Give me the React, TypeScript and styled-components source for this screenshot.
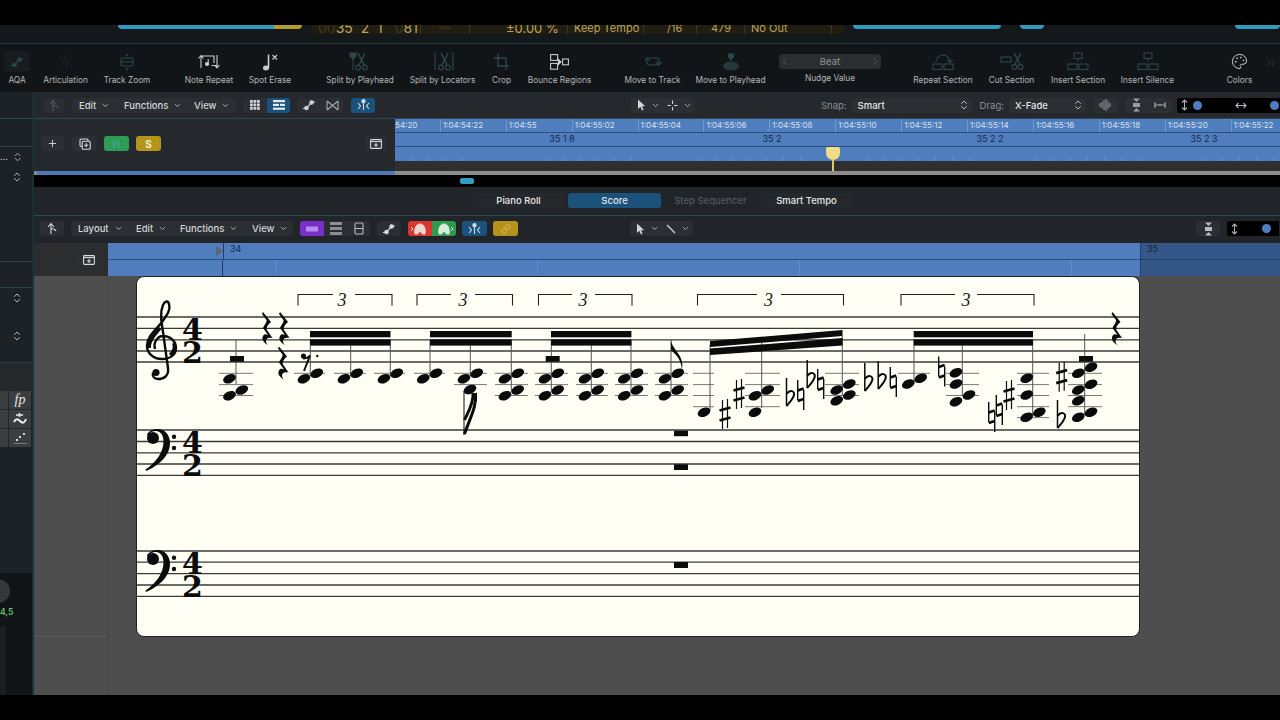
import React from "react";
import styled, { createGlobalStyle } from "styled-components";
import {
  ChevronDown,
  ChevronLeft,
  ChevronRight,
  ChevronsRight,
  ChevronsUpDown,
  Link,
  Palette,
  Plus,
} from "lucide-react";

const GlobalStyle = createGlobalStyle`
  html, body { margin: 0; padding: 0; background: #000; }
  * { box-sizing: border-box; }
  body { font-family: Inter, "Liberation Sans", sans-serif; }
`;

/* ---------- small drawn icons ---------- */

function Ico({ w = 20, h = 18, children }: { w?: number; h?: number; children: React.ReactNode }) {
  return (
    <svg width={w} height={h} viewBox={`0 0 ${w} ${h}`} fill="none" stroke="currentColor" strokeWidth={1.1}>
      {children}
    </svg>
  );
}

const UpArrow = () => (
  <Ico w={12} h={13}>
    <path d="M5 12 V2 M2 5 L5 1.5 L8 5 M5 6.5 C7 6.5 9 7 10 9" />
  </Ico>
);
const Pointer = () => (
  <svg width="9" height="12" viewBox="0 0 9 12">
    <path d="M1 0.5 L1 10 L3.4 7.8 L5 11.4 L6.6 10.7 L5 7.3 L8.2 7.2 Z" fill="currentColor" />
  </svg>
);
const Cross = () => (
  <Ico w={11} h={11}>
    <path d="M5.5 0.5 V4 M5.5 7 V10.5 M0.5 5.5 H4 M7 5.5 H10.5" />
  </Ico>
);
const GridIcon = () => (
  <svg width="10" height="10" viewBox="0 0 10 10" fill="currentColor">
    {[0, 3.5, 7].map((y) =>
      [0, 3.5, 7].map((x) => <rect key={`${x}-${y}`} x={x} y={y} width="2.8" height="2.8" />)
    )}
  </svg>
);
const ListIcon = () => (
  <svg width="12" height="10" viewBox="0 0 12 10" fill="currentColor">
    <rect x="0" y="0" width="12" height="2.2" />
    <rect x="0" y="3.8" width="6" height="2.2" />
    <rect x="7" y="3.8" width="5" height="2.2" />
    <rect x="0" y="7.6" width="12" height="2.2" />
  </svg>
);
const AutoIcon = () => (
  <Ico w={14} h={12}>
    <path d="M1 9.5 H4 L10 3 H13" strokeWidth={1.2} />
    <circle cx="4.5" cy="9" r="1.7" fill="currentColor" />
    <circle cx="9.5" cy="3.5" r="1.7" fill="currentColor" />
  </Ico>
);
const BowtieIcon = () => (
  <Ico w={13} h={11}>
    <path d="M1 1 L12 10 M1 10 L12 1 M1 1 V10 M12 1 V10" />
  </Ico>
);
const FlexIcon = () => (
  <Ico w={13} h={12}>
    <circle cx="6.5" cy="2.2" r="1.6" fill="currentColor" />
    <path d="M6.5 3 V11 M1 4 L3.5 7 L1 10 M12 4 L9.5 7 L12 10" />
  </Ico>
);
const StackIcon = () => (
  <Ico w={12} h={12}>
    <rect x="1" y="1" width="8" height="7.5" rx="1" />
    <rect x="3.2" y="3.2" width="8" height="8" rx="1" fill="#2a2d31" />
    <path d="M7.2 5.2 V9.2 M5.2 7.2 H9.2" />
  </Ico>
);
const TrayIcon = () => (
  <Ico w={12} h={10}>
    <rect x="0.6" y="0.6" width="10.8" height="8.8" rx="0.8" />
    <path d="M0.6 2.6 H11.4" />
    <path d="M6 4 V8 M4 6 H8" />
  </Ico>
);
const TrackZoomIcon = () => (
  <Ico w={14} h={18}>
    <path d="M7 0.5 L5.2 2.8 H8.8 Z M7 17.5 L5.2 15.2 H8.8 Z" fill="currentColor" stroke="none" />
    <rect x="1" y="5" width="12" height="8" rx="1" />
    <path d="M1 9 H13" />
  </Ico>
);
const NoteRepeatIcon = () => (
  <Ico w={22} h={16}>
    <path d="M3 14 V2 M0.5 4.5 L3 1.5 L5.5 4.5 M3 2 H16 V9 M13.5 11.5 L19 11.5 M19 1 V13 M16.5 11 L19 14 L21.5 11" />
    <circle cx="9" cy="10" r="1.5" fill="currentColor" />
    <path d="M10.2 10 V5" />
  </Ico>
);
const SpotEraseIcon = () => (
  <Ico w={16} h={18}>
    <ellipse cx="4" cy="15" rx="3" ry="2.4" fill="currentColor" stroke="none" />
    <path d="M6.5 15 V1.5" strokeWidth={1.6} />
    <path d="M10.5 2 L15 6.5 M15 2 L10.5 6.5" />
  </Ico>
);
const ScissorIcon = ({ head }: { head: "play" | "loc" }) => (
  <Ico w={22} h={19}>
    {head === "play" ? (
      <>
        <path d="M1 1 H7 V4 L4 7 L1 4 Z" fill="currentColor" />
        <path d="M4 6 V18" />
      </>
    ) : (
      <path d="M3 1 V18 M21 1 V18" />
    )}
    <path d="M9 1 L15 13 M16 1 L10 13" strokeWidth={1.5} />
    <circle cx="9" cy="15.5" r="2.4" />
    <circle cx="16" cy="15.5" r="2.4" />
  </Ico>
);
const CropIcon = () => (
  <Ico w={17} h={18}>
    <path d="M5 1 V13 H16 M1 5 H13 V17" strokeWidth={1.4} />
  </Ico>
);
const BounceIcon = () => (
  <Ico w={19} h={16}>
    <rect x="0.6" y="0.6" width="7" height="5.8" />
    <rect x="0.6" y="9.4" width="7" height="5.8" />
    <rect x="12.6" y="5" width="5.8" height="5.8" />
    <path d="M8.5 5.5 L11 8 L8.5 10.5 Z" fill="currentColor" />
  </Ico>
);
const MoveTrackIcon = () => (
  <Ico w={18} h={17}>
    <path d="M2 5 H12 A3 3 0 0 1 15 8 V11 M12 9 L15 12 L18 9 M16 12 H6 A3 3 0 0 1 3 9 V7 M0.5 8 L3 5 L5.5 8" />
  </Ico>
);
const MovePlayIcon = () => (
  <Ico w={18} h={19}>
    <path d="M9 1 V9 M6.5 2 H11.5 V5 L9 7.5 L6.5 5 Z" fill="currentColor" />
    <ellipse cx="9" cy="14" rx="7.5" ry="4" fill="currentColor" opacity="0.7" />
  </Ico>
);
const SectionIcon = ({ kind }: { kind: "repeat" | "insert" | "silence" }) => (
  <Ico w={22} h={19}>
    {kind === "repeat" ? (
      <path d="M4 10 A7 7 0 0 1 18 10 M15.5 8 L18 10.5 L20.5 8" />
    ) : (
      <>
        <rect x="7" y="1" width="8" height="5.5" />
        <path d="M11 6.5 V10" />
      </>
    )}
    <rect x="1" y="12" width="9" height="5.5" />
    <rect x="12" y="12" width="9" height="5.5" />
  </Ico>
);
const CutSectionIcon = () => (
  <Ico w={24} h={19}>
    <rect x="1" y="5" width="10" height="5" />
    <path d="M14 1 L20 12 M21 1 L15 12" strokeWidth={1.4} />
    <circle cx="14.5" cy="15" r="2.4" />
    <circle cx="20.5" cy="15" r="2.4" />
  </Ico>
);
const WaveIcon = () => (
  <svg width="13" height="12" viewBox="0 0 13 12" stroke="currentColor" strokeWidth="1">
    {[[1, 4, 8], [3, 3, 9], [5, 1, 11], [7, 0, 12], [9, 2, 10], [11, 4, 8]].map(([x, a, b]) => (
      <line key={x} x1={x} x2={x} y1={a} y2={b} />
    ))}
  </svg>
);
const HeightIcon = () => (
  <svg width="9" height="14" viewBox="0 0 9 14" fill="currentColor">
    <path d="M1 0.5 H8 L4.5 4 Z M1 13.5 H8 L4.5 10 Z" />
    <rect x="1" y="5" width="7" height="4" />
  </svg>
);
const WidthIcon = () => (
  <svg width="12" height="8" viewBox="0 0 12 8" fill="currentColor">
    <path d="M0 0.5 V7.5 L4 4 Z M12 0.5 V7.5 L8 4 Z" />
    <rect x="4" y="3" width="4" height="2" />
  </svg>
);
const VArrows = () => (
  <Ico w={7} h={12}>
    <path d="M3.5 1 V11 M1 3.5 L3.5 1 L6 3.5 M1 8.5 L3.5 11 L6 8.5" />
  </Ico>
);
const HArrows = () => (
  <Ico w={12} h={7}>
    <path d="M1 3.5 H11 M3.5 1 L1 3.5 L3.5 6 M8.5 1 L11 3.5 L8.5 6" />
  </Ico>
);
const SingleLaneIcon = () => (
  <svg width="12" height="6" viewBox="0 0 12 6" fill="currentColor">
    <rect x="0" y="0.5" width="12" height="5" rx="0.8" />
  </svg>
);
const LanesIcon = () => (
  <svg width="12" height="13" viewBox="0 0 12 13" fill="currentColor">
    <rect x="0" y="0" width="12" height="3" />
    <rect x="0" y="5" width="12" height="3" />
    <rect x="0" y="10" width="12" height="3" />
  </svg>
);
const TwoLanesIcon = () => (
  <Ico w={10} h={13}>
    <rect x="1" y="1" width="8" height="11" rx="1" />
    <path d="M1 6.5 H9" />
  </Ico>
);
const BrainIcon = ({ side }: { side: "l" | "r" }) => (
  <svg width="20" height="12" viewBox="0 0 20 12" fill="none" stroke="currentColor" strokeWidth="1">
    {side === "l" ? <path d="M1 4 L3 6 L1 8" /> : <path d="M17 4 L19 6 L17 8" />}
    <path d="M5 11 C4 6 6 1 10 1 C14 1 16 6 15 11 H12.5 L10 8 L7.5 11 Z" fill="currentColor" />
  </svg>
);

/* ---------- chrome ---------- */

const Page = styled.div`
  width: 1280px;
  height: 720px;
  display: flex;
  flex-direction: column;
  overflow: hidden;
  background: #000;
  color: #d5d7d9;
`;

const BlackBand = styled.div`
  flex: 0 0 25px;
  background: #000;
`;

const Transport = styled.div`
  flex: 0 0 19px;
  display: flex;
  align-items: flex-start;
  background: #14181b;
  border-bottom: 1px solid #1f3a3c;
  overflow: hidden;
`;

const KeyBar = styled.div<{ $left: number; $w: number; $split?: number }>`
  flex: 0 0 ${(p) => p.$w}px;
  margin-left: ${(p) => p.$left}px;
  height: 4px;
  border-radius: 0 0 4px 4px;
  background: ${(p) =>
    p.$split
      ? `linear-gradient(90deg, #2f9dbf ${p.$split}%, #b79a2b ${p.$split}%)`
      : "#2f9dbf"};
`;

const Lcd = styled.div`
  flex: 0 0 532px;
  margin-left: 10px;
  height: 9px;
  display: flex;
  background: #211d10;
  border-radius: 0 0 5px 5px;
  color: #bca35c;
`;

const LcdCell = styled.div<{ $w: number; $size?: number; $pad?: number }>`
  flex: 0 0 ${(p) => p.$w}px;
  height: 9px;
  padding-left: ${(p) => p.$pad ?? 6}px;
  border-right: 1px solid #3d3518;
  display: flex;
  font-size: ${(p) => p.$size ?? 11}px;
  line-height: 6px;
  white-space: pre;
  overflow: hidden;
  &:last-child { border-right: 0; }
`;

const DimDigit = styled.span`
  color: #3f381d;
`;

const MainToolbar = styled.div`
  flex: 0 0 48px;
  display: flex;
  align-items: stretch;
  padding-left: 5px;
  position: relative;
  background: #121518;
`;

const ToolItem = styled.div<{ $w: number; $gap: number; $dim?: boolean }>`
  flex: 0 0 ${(p) => p.$w}px;
  min-width: 0;
  margin-left: ${(p) => p.$gap}px;
  display: flex;
  flex-direction: column;
  align-items: center;
  color: ${(p) => (p.$dim ? "#2c484a" : "#c8cacc")};
`;

const ToolIcon = styled.div<{ $bg?: boolean }>`
  margin-top: 7px;
  width: ${(p) => (p.$bg ? "26px" : "auto")};
  height: 21px;
  border-radius: 3px;
  background: ${(p) => (p.$bg ? "#181c1f" : "transparent")};
  display: flex;
  align-items: center;
  justify-content: center;
`;

const ToolLabel = styled.div`
  margin-top: 2px;
  font-size: 8.3px;
  line-height: 12px;
  color: #b4b7b9;
  white-space: nowrap;
`;

const Nudge = styled.div`
  width: 102px;
  height: 15px;
  margin-top: 10px;
  margin-bottom: 1px;
  border-radius: 4px;
  background: #2b2e30;
  display: flex;
  align-items: center;
  justify-content: space-between;
  color: #50565a;
`;

const NudgeText = styled.span`
  font-size: 9.5px;
  color: #8d9193;
`;

const MoreTools = styled.div`
  position: absolute;
  right: 2px;
  top: 10px;
  color: #262b2e;
`;

const Body = styled.div`
  flex: 0 0 603px;
  display: flex;
  min-height: 0;
`;

const Bottom = styled.div`
  flex: 0 0 25px;
  background: #000;
`;

/* ---------- left inspector ---------- */

const Sidebar = styled.div`
  flex: 0 0 34px;
  display: flex;
  flex-direction: column;
  background: #1d2226;
  border-right: 2px solid #17303a;
  overflow: hidden;
`;

const SideBlock = styled.div<{ $h: number; $line?: boolean; $bg?: string }>`
  flex: 0 0 ${(p) => p.$h}px;
  display: flex;
  align-items: center;
  justify-content: flex-end;
  padding-right: 9px;
  font-size: 9px;
  color: #c5c7c9;
  background: ${(p) => p.$bg ?? "transparent"};
  border-bottom: ${(p) => (p.$line ? "1px solid #2b4347" : "0")};
`;

const Ellipsis = styled.span`
  margin-right: 4px;
  line-height: 8px;
`;

const GlyphGrid = styled.div`
  flex: 0 0 56px;
  display: grid;
  grid-template-columns: 8px 22px;
  grid-template-rows: repeat(3, 1fr);
  gap: 1px;
  width: 31px;
  background: #232629;
`;

const GlyphCell = styled.div<{ $serif?: boolean }>`
  display: flex;
  align-items: center;
  justify-content: center;
  background: #3b3e41;
  color: #e2e2e2;
  font-family: ${(p) => (p.$serif ? '"Liberation Serif", serif' : "inherit")};
  font-style: ${(p) => (p.$serif ? "italic" : "normal")};
  font-size: 14px;
  line-height: 14px;
`;

const SideFill = styled.div`
  flex: 0 0 126px;
`;

const SideFoot = styled.div`
  flex: 1;
  display: flex;
  flex-direction: column;
  background: #101417;
  overflow: hidden;
`;

const Knob = styled.div`
  width: 24px;
  height: 24px;
  margin: 6px 0 0 -14px;
  border-radius: 50%;
  background: #34383b;
`;

const LevelText = styled.div`
  margin-top: 4px;
  font-size: 8.5px;
  font-weight: 600;
  color: #5fc76a;
  white-space: nowrap;
`;

const SideSlot = styled.div`
  flex: 1;
  margin-top: 9px;
  width: 6px;
  background: #1b1f22;
`;

/* ---------- main column ---------- */

const Main = styled.div`
  flex: 1;
  min-width: 0;
  display: flex;
  flex-direction: column;
`;

const LocalBar = styled.div<{ $h: number }>`
  flex: 0 0 ${(p) => p.$h}px;
  display: flex;
  align-items: center;
  background: #25282c;
  border-bottom: 1px solid #2d4a50;
`;

const Btn = styled.div<{ $w: number; $gap: number; $bg?: string; $fg?: string }>`
  flex: 0 0 ${(p) => p.$w}px;
  margin-left: ${(p) => p.$gap}px;
  height: 15px;
  border-radius: 3px;
  background: ${(p) => p.$bg ?? "#2b2e32"};
  color: ${(p) => p.$fg ?? "#d8dadc"};
  display: flex;
  align-items: center;
  justify-content: center;
  font-size: 9.5px;
  font-weight: 600;
`;

const BtnGroup = styled.div<{ $w: number; $gap: number }>`
  flex: 0 0 ${(p) => p.$w}px;
  margin-left: ${(p) => p.$gap}px;
  height: 15px;
  border-radius: 3px;
  background: #2b2e32;
  display: flex;
  align-items: center;
  overflow: hidden;
`;

const Seg = styled.div<{ $w: number; $bg?: string; $fg?: string }>`
  flex: 0 0 ${(p) => p.$w}px;
  height: 100%;
  background: ${(p) => p.$bg ?? "transparent"};
  color: ${(p) => p.$fg ?? "#d0d2d4"};
  display: flex;
  align-items: center;
  justify-content: center;
`;

const MenuItem = styled.div<{ $w: number; $pad: number }>`
  flex: 0 0 ${(p) => p.$w}px;
  padding-left: ${(p) => p.$pad}px;
  display: flex;
  align-items: center;
  gap: 5px;
  font-size: 9.5px;
  font-weight: 500;
  color: #d3d5d7;
  white-space: nowrap;
`;

const SmallLabel = styled.div<{ $gap: number; $w: number }>`
  flex: 0 0 ${(p) => p.$w}px;
  margin-left: ${(p) => p.$gap}px;
  font-size: 9.5px;
  color: #8c8f92;
`;

const Select = styled.div<{ $w: number; $gap: number }>`
  flex: 0 0 ${(p) => p.$w}px;
  margin-left: ${(p) => p.$gap}px;
  height: 15px;
  padding: 0 2px 0 6px;
  border-radius: 3px;
  background: #2b2e32;
  display: flex;
  align-items: center;
  justify-content: space-between;
  font-size: 9.5px;
  font-weight: 500;
  color: #e4e5e6;
`;

const SliderBox = styled.div<{ $w: number; $gap: number }>`
  flex: 0 0 ${(p) => p.$w}px;
  margin-left: ${(p) => p.$gap}px;
  height: 15px;
  border-radius: 3px 0 0 3px;
  background: #000;
  display: flex;
  align-items: center;
  padding-left: 4px;
  color: #b0b3b6;
`;

const Dot = styled.span<{ $gap: number }>`
  flex: 0 0 9px;
  height: 9px;
  margin-left: ${(p) => p.$gap}px;
  border-radius: 50%;
  background: #4f7dbd;
`;

const SliderGlyph = styled.span<{ $gap: number }>`
  display: flex;
  margin-left: ${(p) => p.$gap}px;
`;

const TrackRow = styled.div`
  flex: 0 0 52px;
  display: flex;
  background: #25282c;
`;

const TrackHead = styled.div`
  flex: 0 0 361px;
  height: 50px;
  padding-bottom: 1px;
  display: flex;
  align-items: center;
`;

const TrackBtn = styled.div<{ $w: number; $gap: number; $bg?: string; $fg?: string }>`
  flex: 0 0 ${(p) => p.$w}px;
  margin-left: ${(p) => p.$gap}px;
  height: 15px;
  border-radius: 3px;
  background: ${(p) => p.$bg ?? "#2b2e32"};
  color: ${(p) => p.$fg ?? "#d8dadc"};
  display: flex;
  align-items: center;
  justify-content: center;
  font-size: 10px;
  font-weight: 700;
`;

const TrackRuler = styled.div`
  flex: 1;
  min-width: 0;
  display: flex;
  flex-direction: column;
  position: relative;
  overflow: hidden;
  background: #2f2f2f;
`;

const TimeRow = styled.div`
  flex: 0 0 14px;
  display: flex;
  margin-left: -21px;
  background: #4f7dbd;
  border-bottom: 1px solid #2b4f85;
`;

const TimeTick = styled.div`
  flex: 0 0 65.9px;
  padding-left: 2px;
  font-size: 8px;
  line-height: 13px;
  color: #d5e1f2;
  white-space: nowrap;
  border-left: 1px solid #7397cb;
`;

const BarRow = styled.div`
  flex: 0 0 14px;
  display: flex;
  background: #4f7dbd;
  border-bottom: 1px solid #2b4f85;
`;

const BarLabel = styled.div<{ $w: number }>`
  flex: 0 0 ${(p) => p.$w}px;
  text-align: center;
  font-size: 9px;
  line-height: 12px;
  color: #16294a;
  white-space: nowrap;
`;

const SubRow = styled.div`
  flex: 0 0 14px;
  background-color: #4f7dbd;
  background-image: repeating-linear-gradient(
    90deg,
    transparent 0,
    transparent 16.2px,
    #6b93cb 16.2px,
    #6b93cb 16.9px
  );
  background-size: 100% 3px;
  background-repeat: no-repeat;
  background-position: 0 bottom;
`;

const PlayheadFlag = styled.div`
  position: absolute;
  left: 431px;
  top: 28px;
  width: 14px;
  height: 13px;
  background: #f3dc86;
  border-radius: 2px 2px 7px 7px;
`;

const PlayheadLine = styled.div`
  position: absolute;
  left: 437px;
  top: 40px;
  width: 2px;
  height: 16px;
  background: #e6c95f;
`;

const OverviewLine = styled.div`
  flex: 0 0 4px;
  display: flex;
  background: #000;
`;

const OverviewPart = styled.div<{ $w?: number; $bg: string }>`
  flex: ${(p) => (p.$w ? `0 0 ${p.$w}px` : "1")};
  background: ${(p) => p.$bg};
`;

const Strip = styled.div`
  flex: 0 0 12px;
  background: #000;
  padding: 3px 0 0 426px;
`;

const ScrollPill = styled.div`
  width: 14px;
  height: 6px;
  border-radius: 2px;
  background: #2f9dbf;
`;

const TabBar = styled.div`
  flex: 0 0 29px;
  display: flex;
  align-items: center;
  padding: 0 0 2px 438px;
  background: #212428;
  border-bottom: 1px solid #2d4a50;
`;

const Tab = styled.div<{ $active?: boolean; $off?: boolean }>`
  flex: 0 0 93px;
  margin-right: 3px;
  height: 15px;
  border-radius: 3px;
  background: ${(p) => (p.$active ? "#1a527c" : p.$off ? "transparent" : "#24272b")};
  color: ${(p) => (p.$off ? "#55585b" : "#e4e6e8")};
  display: flex;
  align-items: center;
  justify-content: center;
  font-size: 9.5px;
  font-weight: 500;
`;

const ScoreBar = styled(LocalBar)`
  background: #212428;
  border-bottom: 0;
  padding-bottom: 2px;
`;

const ScoreRuler = styled.div`
  flex: 0 0 33px;
  display: flex;
`;

const RulerHead = styled.div`
  flex: 0 0 74px;
  display: flex;
  align-items: center;
  background: #2c2d2f;
`;

const RulerBlue = styled.div<{ $dim?: boolean }>`
  flex: ${(p) => (p.$dim ? "1" : "0 0 1032px")};
  display: flex;
  flex-direction: column;
  background: ${(p) => (p.$dim ? "#355788" : "#4f7dbd")};
  border-left: ${(p) => (p.$dim ? "1px solid #243f68" : "0")};
`;

const RulerTop = styled.div<{ $dim?: boolean; $pad: number }>`
  flex: 0 0 16px;
  display: flex;
  align-items: center;
  padding-left: ${(p) => p.$pad}px;
  border-bottom: 1px solid ${(p) => (p.$dim ? "#243f68" : "#2b4f85")};
`;

const RulerMark = styled.div`
  width: 0;
  height: 0;
  border-left: 7px solid #5d6670;
  border-top: 5px solid transparent;
  border-bottom: 5px solid transparent;
`;

const RulerNum = styled.div<{ $dim?: boolean }>`
  padding-left: 6px;
  height: 16px;
  line-height: 12px;
  font-size: 9px;
  color: ${(p) => (p.$dim ? "#15233a" : "#162c55")};
  border-left: ${(p) => (p.$dim ? "0" : "1px solid #213d6c")};
`;

const RulerLower = styled.div`
  flex: 1;
  display: flex;
`;

const RulerSeg = styled.div<{ $w: number; $strong?: boolean }>`
  flex: 0 0 ${(p) => p.$w}px;
  border-right: 1px solid ${(p) => (p.$strong ? "#213d6c" : "#5f8ac6")};
`;

const Canvas = styled.div`
  flex: 1;
  min-height: 0;
  display: flex;
  background: #4e4e4e;
`;

const Gutter = styled.div`
  flex: 0 0 74px;
  border-right: 1px solid #454545;
`;

const GutterTop = styled.div`
  height: 361px;
  border-bottom: 1px solid #5c5c5c;
`;

const Sheet = styled.div`
  flex: 0 0 1004px;
  height: 361px;
  margin: 0 0 0 28px;
  background: #fffff6;
  border-radius: 8px;
  border: 1px solid #222;
  overflow: hidden;
`;

const ScoreSvg = styled.svg`
  display: block;
  width: 1002px;
  height: 359px;
`;

/* ---------- score drawing, in page coordinates ---------- */

const INK = "#0b0b0b";
const TOP = [317, 328.4, 339.8, 351, 362];
const BASS = [430, 441.5, 452.8, 464, 475.3];
const THIRD = [551, 562.2, 573.6, 585, 596.3];

const Head = ({ x, y }: { x: number; y: number }) => (
  <ellipse cx={x} cy={y} rx={6.7} ry={4.3} transform={`rotate(-24 ${x} ${y})`} fill={INK} />
);

const Rest = ({ x, y }: { x: number; y: number }) => (
  <path
    transform={`translate(${x} ${y})`}
    fill={INK}
    d="M-4,0 L4,10 C1,13 -1,15 0,18 L5.5,26 C2,25 -1,26 -1,29 C-1,31 0,32 1,33 C-3,31 -6,27 -4,24 C-3,22 -1,22 1,23 L-4,16 C-2,12 0,10 -0.5,8 L-5,2 Z"
  />
);

const Sharp = ({ x, y }: { x: number; y: number }) => (
  <g stroke={INK}>
    <path d={`M${x - 2.5} ${y - 14} V${y + 15} M${x + 2.5} ${y - 15} V${y + 14}`} strokeWidth={1.2} />
    <path d={`M${x - 5.5} ${y - 3.5} L${x + 5.5} ${y - 6.5} M${x - 5.5} ${y + 6.5} L${x + 5.5} ${y + 3.5}`} strokeWidth={2.8} />
  </g>
);

const Flat = ({ x, y }: { x: number; y: number }) => (
  <g stroke={INK} fill="none">
    <path d={`M${x - 3.5} ${y - 18} V${y + 10}`} strokeWidth={1.5} />
    <path d={`M${x - 3.5} ${y - 2} C${x} ${y - 7} ${x + 5} ${y - 5} ${x + 4} ${y - 1} C${x + 3} ${y + 3} ${x} ${y + 6} ${x - 3.5} ${y + 10}`} strokeWidth={2} />
  </g>
);

const Natural = ({ x, y }: { x: number; y: number }) => (
  <g stroke={INK}>
    <path d={`M${x - 3} ${y - 15} V${y + 5} M${x + 3} ${y - 5} V${y + 15}`} strokeWidth={1.4} />
    <path d={`M${x - 3} ${y - 4.5} L${x + 3} ${y - 6.5} M${x - 3} ${y + 6} L${x + 3} ${y + 4}`} strokeWidth={2.8} />
  </g>
);

const TrebleClef = () => (
  <g fill="none" stroke={INK}>
    <path
      strokeWidth={2.4}
      d="M155,349 C153,342 158,336 163,336 C170,336 176,341 176,348 C176,355 170,359 162,359 C153,359 147,353 147,346 C147,336 156,330 162,322 C167,315 171,310 169,304 C168,300 165,301 163,305 C160,312 161,320 163,332 L168,368 C169,376 164,379 158,379 C154,379 152,376 153,373"
    />
    <path strokeWidth={3.6} d="M149,348 C149,340 155,334 160,328" />
    <path strokeWidth={3.6} d="M170,355 C174,352 175,347 174,343" />
    <circle cx={156} cy={372.5} r={3.6} fill={INK} stroke="none" />
  </g>
);

const BassClef = ({ y }: { y: number }) => (
  <g transform={`translate(0 ${y - 430})`} fill={INK}>
    <path d="M147,434 C149,431 153,429 157,429 C165,429 170,435 170,443 C170,456 158,466 146,471 L145.5,469.5 C155,463 163.5,453 163.5,441.5 C163.5,434.5 160,431 156,431 C152,431 149,433 148,437 Z" />
    <circle cx={153} cy={438} r={6} />
    <circle cx={174} cy={436.7} r={2.2} />
    <circle cx={174} cy={448} r={2.2} />
  </g>
);

const TimeSig = ({ a, b }: { a: number; b: number }) => (
  <g fontFamily='"DejaVu Serif", serif' fontWeight={700} fontSize={30} textAnchor="middle" fill={INK}>
    <text x={192.5} y={a}>4</text>
    <text x={192.5} y={b}>2</text>
  </g>
);

const Staff = ({ lines }: { lines: number[] }) => (
  <g stroke="#3a3a3a" strokeWidth={1.3}>
    {lines.map((y) => (
      <line key={y} x1={137} x2={1140} y1={y} y2={y} />
    ))}
  </g>
);

const brackets = [
  { a: 298, b: 392, l: 333, r: 355, t: 342 },
  { a: 417, b: 512.5, l: 451, r: 475, t: 463 },
  { a: 538.5, b: 632, l: 572, r: 595, t: 583 },
  { a: 697.5, b: 843.5, l: 757, r: 781, t: 768.5 },
  { a: 901, b: 1034, l: 955, r: 977, t: 966 },
];

const Bracket = ({ a, b, l, r, t }: { a: number; b: number; l: number; r: number; t: number }) => (
  <g>
    <path d={`M${a} 305.5 V294.5 H${l} M${r} 294.5 H${b} V305.5`} fill="none" stroke="#222" strokeWidth={1.1} />
    <text x={t} y={306} textAnchor="middle" fontFamily='"Liberation Serif", serif' fontStyle="italic" fontSize={18} fill="#1a1a1a">
      3
    </text>
  </g>
);

type Chord = { stem: [number, number, number]; heads: [number, number][] };

// left/right heads of the "second" clusters
const pair = (x: number, y1 = 378.7, y2 = 373.3): [number, number][] => [
  [x, y1],
  [x + 12.7, y2],
];
const quad = (x: number): [number, number][] => [...pair(x), ...pair(x, 395.7, 390)];

const chords: Chord[] = [
  { stem: [236, 340, 384], heads: [[229.5, 378.7], [229.5, 395.7], [241.8, 390]] },
  { stem: [310.3, 340, 376], heads: pair(304) },
  { stem: [350.7, 340, 376], heads: pair(344) },
  { stem: [390.3, 340, 376], heads: pair(384) },
  { stem: [430, 340, 376], heads: pair(423.3) },
  { stem: [470.3, 340, 376], heads: [...pair(464), [470, 389.5]] },
  { stem: [511.3, 340, 392], heads: quad(505) },
  { stem: [551.3, 340, 392], heads: quad(545) },
  { stem: [591.3, 340, 392], heads: quad(585) },
  { stem: [631, 340, 392], heads: quad(624.3) },
  { stem: [671, 340, 392], heads: quad(665) },
  { stem: [710, 345, 410], heads: [[704, 412.3]] },
  { stem: [761.7, 340, 408], heads: [[755, 412.3], [755, 395.7], [767.7, 390]] },
  { stem: [842.3, 336, 396], heads: [[836.7, 390], [849.3, 384], [836.7, 400.7], [849.3, 395]] },
  { stem: [914, 340, 382], heads: [[908.3, 384], [920.7, 378.3]] },
  { stem: [962.3, 340, 396], heads: [[956, 372.7], [956, 384], [956, 401.7], [969, 395]] },
  { stem: [1032.7, 340, 415], heads: [[1026.7, 378.3], [1026.7, 395], [1026.7, 417.3], [1039.3, 412.3]] },
  {
    stem: [1084.7, 334, 415],
    heads: [[1078.3, 373.3], [1091, 367.3], [1078.3, 390], [1091, 384.3], [1078.3, 400.7], [1078.3, 417.3], [1091, 412.3]],
  },
];

const ledgerSets: [number, number, number[]][] = [
  [219, 253, [373.3, 384.6, 395.5]],
  [294, 325, [373.3]],
  [334, 366, [373.3]],
  [374, 405, [373.3]],
  [414, 445, [373.3]],
  [454, 487, [373.3, 384.6]],
  [495, 528, [373.3, 384.6, 395.5]],
  [535, 568, [373.3, 384.6, 395.5]],
  [576, 608, [373.3, 384.6, 395.5]],
  [615, 648, [373.3, 384.6, 395.5]],
  [655, 688, [373.3, 384.6, 395.5]],
  [693, 714, [373.3, 384.6, 395.5, 406.7]],
  [745, 780, [373.3, 384.6, 395.5, 406.7]],
  [825, 859, [373.3, 384.6, 395.5]],
  [898, 930, [373.3]],
  [946, 979, [373.3, 384.6, 395.5]],
  [1017, 1049, [373.3, 384.6, 395.5, 406.7, 417.6]],
  [1068, 1102, [373.3, 384.6, 395.5, 406.7]],
];

const restBlocks: [number, number, number][] = [
  [230, 356, 5.7],
  [545.7, 356, 5.7],
  [1079, 356, 5.7],
  [674, 430.7, 5.5],
  [674, 464.3, 5.7],
  [674, 562, 6],
];

const flatBeams: [number, number][] = [
  [310, 390.5],
  [430, 511.7],
  [551, 631.4],
  [913.7, 1033],
];

function Score() {
  return (
    <ScoreSvg viewBox="137 277 1002 359">
      <Staff lines={TOP} />
      <Staff lines={BASS} />
      <Staff lines={THIRD} />
      <TrebleClef />
      <BassClef y={430} />
      <BassClef y={551} />
      <TimeSig a={340} b={363} />
      <TimeSig a={453} b={476} />
      <TimeSig a={574} b={597} />
      {brackets.map((b) => (
        <Bracket key={b.a} {...b} />
      ))}
      {ledgerSets.map(([a, b, ys]) =>
        ys.map((y) => <line key={`${a}-${y}`} x1={a} x2={b} y1={y} y2={y} stroke="#555" strokeWidth={0.8} />)
      )}
      {chords.map((c, i) => (
        <g key={i}>
          <line x1={c.stem[0]} x2={c.stem[0]} y1={c.stem[1]} y2={c.stem[2]} stroke="#555" strokeWidth={1} />
          {c.heads.map(([x, y]) => (
            <Head key={`${x}-${y}`} x={x} y={y} />
          ))}
        </g>
      ))}
      {flatBeams.map(([a, b]) => (
        <g key={a} fill={INK}>
          <rect x={a} y={331} width={b - a} height={6.3} />
          <rect x={a} y={339.4} width={b - a} height={6.2} />
        </g>
      ))}
      <path d="M710 341 L842.5 330 V336 L710 347 Z" fill={INK} />
      <path d="M710 348.5 L842.5 338 V345.5 L710 355 Z" fill={INK} />
      {restBlocks.map(([x, y, h]) => (
        <rect key={`${x}-${y}`} x={x} y={y} width={14} height={h} fill={INK} />
      ))}
      <Rest x={267} y={312} />
      <Rest x={284} y={312} />
      <Rest x={283} y={346.5} />
      <Rest x={1116.5} y={312} />
      {/* dotted eighth rest over the first triplet */}
      <g fill={INK} stroke={INK}>
        <circle cx={303.5} cy={356} r={2.6} stroke="none" />
        <path d="M303 358.5 C306 358.5 308 358 310 355.5 L304 371" fill="none" strokeWidth={2} />
        <circle cx={317.3} cy={356} r={1.2} stroke="none" />
      </g>
      {/* thirty-second flags under the fifth chord */}
      <g fill="none" stroke={INK}>
        <path d="M464 391 V435" strokeWidth={1} />
        <path d="M475.5 393 C477 406 470 418 464.5 434" strokeWidth={3} />
        <path d="M473 393 C474 403 468 412 464.5 420" strokeWidth={3} />
      </g>
      {/* eighth flag */}
      <path d="M671 340 C672 350 685 355 682 370 C681 358 675 354 671 350 Z" fill={INK} />
      <Sharp x={725} y={414} />
      <Sharp x={739} y={394} />
      <Flat x={790} y={396} />
      <Natural x={800.7} y={395} />
      <Flat x={810.7} y={378} />
      <Natural x={820.7} y={384} />
      <Flat x={868.3} y={381} />
      <Flat x={881.7} y={379} />
      <Natural x={893.3} y={382} />
      <Natural x={941.7} y={371.5} />
      <Natural x={991.7} y={417} />
      <Natural x={999.3} y={410} />
      <Sharp x={1009} y={395} />
      <Sharp x={1061.7} y={376.7} />
      <Flat x={1061} y={418} />
    </ScoreSvg>
  );
}

/* ---------- data ---------- */

function ArticulationIcon() {
  return (
    <Ico w={18} h={18}>
      <path d="M9 2 V16 M3 5 L15 13 M15 5 L3 13" strokeDasharray="1.5 1.5" opacity={0.45} />
    </Ico>
  );
}

const tools = [
  { label: "Articulation", w: 45, gap: 13, dim: true, icon: <ArticulationIcon /> },
  { label: "Track Zoom", w: 46, gap: 16, dim: true, icon: <TrackZoomIcon /> },
  { label: "Note Repeat", w: 48, gap: 35, icon: <NoteRepeatIcon /> },
  { label: "Spot Erase", w: 42, gap: 16, icon: <SpotEraseIcon /> },
  { label: "Split by Playhead", w: 68, gap: 35, dim: true, icon: <ScissorIcon head="play" /> },
  { label: "Split by Locators", w: 65, gap: 16, dim: true, icon: <ScissorIcon head="loc" /> },
  { label: "Crop", w: 19, gap: 17, dim: true, icon: <CropIcon /> },
  { label: "Bounce Regions", w: 63, gap: 17, icon: <BounceIcon /> },
  { label: "Move to Track", w: 55, gap: 34, dim: true, icon: <MoveTrackIcon /> },
  { label: "Move to Playhead", w: 69, gap: 16, dim: true, icon: <MovePlayIcon /> },
];

const tools2 = [
  { label: "Repeat Section", w: 60, gap: 32, dim: true, icon: <SectionIcon kind="repeat" /> },
  { label: "Cut Section", w: 45, gap: 16, dim: true, icon: <CutSectionIcon /> },
  { label: "Insert Section", w: 54, gap: 17, dim: true, icon: <SectionIcon kind="insert" /> },
  { label: "Insert Silence", w: 51, gap: 17, dim: true, icon: <SectionIcon kind="silence" /> },
  { label: "Colors", w: 25, gap: 54, icon: <Palette size={17} strokeWidth={1.4} /> },
];

const ticks = ["54:20", "54:22", "55", "55:02", "55:04", "55:06", "55:08", "55:10", "55:12", "55:14", "55:16", "55:18", "55:20", "55:22"];

const Chev = () => <ChevronDown size={9} strokeWidth={2.4} color="#b8babc" />;
const Updown = () => <ChevronsUpDown size={12} strokeWidth={1.8} color="#c8cacc" />;

function Tool({ t }: { t: { label: string; w: number; gap: number; dim?: boolean; icon: React.ReactNode } }) {
  return (
    <ToolItem $w={t.w} $gap={t.gap} $dim={t.dim}>
      <ToolIcon>{t.icon}</ToolIcon>
      <ToolLabel>{t.label}</ToolLabel>
    </ToolItem>
  );
}

export default function App() {
  return (
    <Page>
      <GlobalStyle />
      <BlackBand />
      <Transport>
        <KeyBar $left={118} $w={184} $split={85} />
        <Lcd>
          <LcdCell $w={109} $size={14} $pad={6}>
            <DimDigit>00</DimDigit>
            {"35  2  1   "}
            <DimDigit>0</DimDigit>
            {"81"}
          </LcdCell>
          <LcdCell $w={49} $size={7} $pad={18}>
            <DimDigit>ɴɴɴ</DimDigit>
          </LcdCell>
          <LcdCell $w={98} $size={13} $pad={36}>
            ±0.00 %
          </LcdCell>
          <LcdCell $w={76}>Keep Tempo</LcdCell>
          <LcdCell $w={53} $pad={23}>
            /16
          </LcdCell>
          <LcdCell $w={48} $pad={14}>
            479
          </LcdCell>
          <LcdCell $w={87}>No Out</LcdCell>
          <LcdCell $w={12} />
        </Lcd>
        <KeyBar $left={9} $w={148} />
        <KeyBar $left={19} $w={24} />
        <KeyBar $left={191} $w={45} />
      </Transport>

      <MainToolbar>
        <ToolItem $w={26} $gap={-1} $dim>
          <ToolIcon $bg>
            <AutoIcon />
          </ToolIcon>
          <ToolLabel>AQA</ToolLabel>
        </ToolItem>
        {tools.map((t) => (
          <Tool key={t.label} t={t} />
        ))}
        <ToolItem $w={102} $gap={14}>
          <Nudge>
            <ChevronLeft size={11} />
            <NudgeText>Beat</NudgeText>
            <ChevronRight size={11} />
          </Nudge>
          <ToolLabel>Nudge Value</ToolLabel>
        </ToolItem>
        {tools2.map((t) => (
          <Tool key={t.label} t={t} />
        ))}
        <MoreTools>
          <ChevronsRight size={14} />
        </MoreTools>
      </MainToolbar>

      <Body>
        <Sidebar>
          <SideBlock $h={27} $line />
          <SideBlock $h={28} $line />
          <SideBlock $h={20}>
            <Ellipsis>...</Ellipsis>
            <Updown />
          </SideBlock>
          <SideBlock $h={19}>
            <Updown />
          </SideBlock>
          <SideBlock $h={76} $line />
          <SideBlock $h={26} $line />
          <SideBlock $h={20}>
            <Updown />
          </SideBlock>
          <SideBlock $h={18} />
          <SideBlock $h={20}>
            <Updown />
          </SideBlock>
          <SideBlock $h={17} $line />
          <SideBlock $h={28} $bg="#26292c" />
          <GlyphGrid>
            <GlyphCell />
            <GlyphCell $serif>fp</GlyphCell>
            <GlyphCell />
            <GlyphCell>
              <svg width="16" height="15" viewBox="0 0 16 15" fill="none" stroke="#eee" strokeWidth="2">
                <path d="M2 10 C4 6 6 7 8 9 C10 11 12 12 14 7" />
                <path d="M4 3 H11 M7.5 1 V5" strokeWidth="1.4" />
              </svg>
            </GlyphCell>
            <GlyphCell />
            <GlyphCell>
              <svg width="13" height="13" viewBox="0 0 13 13" fill="#d8d8d8">
                <rect x="9" y="1" width="2" height="2" />
                <rect x="5" y="4" width="2" height="2" />
                <rect x="2" y="7" width="2" height="2" />
                <rect x="0" y="11" width="13" height="1" opacity="0.4" />
              </svg>
            </GlyphCell>
          </GlyphGrid>
          <SideFill />
          <SideFoot>
            <Knob />
            <LevelText>4,5</LevelText>
            <SideSlot />
          </SideFoot>
        </Sidebar>

        <Main>
          <LocalBar $h={27}>
            <Btn $w={20} $gap={10} $fg="#54585b">
              <UpArrow />
            </Btn>
            <BtnGroup $w={164} $gap={8}>
              <MenuItem $w={45} $pad={7}>Edit<Chev /></MenuItem>
              <MenuItem $w={72} $pad={7}>Functions<Chev /></MenuItem>
              <MenuItem $w={47} $pad={5}>View<Chev /></MenuItem>
            </BtnGroup>
            <BtnGroup $w={47} $gap={7}>
              <Seg $w={24}><GridIcon /></Seg>
              <Seg $w={23} $bg="#1a527c" $fg="#e2e8ee"><ListIcon /></Seg>
            </BtnGroup>
            <BtnGroup $w={46} $gap={7}>
              <Seg $w={24}><AutoIcon /></Seg>
              <Seg $w={22} $fg="#a4a7aa"><BowtieIcon /></Seg>
            </BtnGroup>
            <Btn $w={24} $gap={8} $bg="#1a527c" $fg="#cfdce8">
              <FlexIcon />
            </Btn>
            <BtnGroup $w={63} $gap={256}>
              <Seg $w={31}>
                <MenuItem $w={22} $pad={3}><Pointer /><Chev /></MenuItem>
              </Seg>
              <Seg $w={32} $fg="#9a9da0">
                <MenuItem $w={24} $pad={2}><Cross /><Chev /></MenuItem>
              </Seg>
            </BtnGroup>
            <SmallLabel $gap={127} $w={25}>Snap:</SmallLabel>
            <Select $w={120} $gap={5}>Smart<Updown /></Select>
            <SmallLabel $gap={8} $w={23}>Drag:</SmallLabel>
            <Select $w={77} $gap={5}>X-Fade<Updown /></Select>
            <Btn $w={24} $gap={8} $fg="#9a9da0"><WaveIcon /></Btn>
            <BtnGroup $w={47} $gap={7}>
              <Seg $w={24} $fg="#9a9da0"><HeightIcon /></Seg>
              <Seg $w={23} $fg="#7d8083"><WidthIcon /></Seg>
            </BtnGroup>
            <SliderBox $w={105} $gap={5}>
              <VArrows />
              <Dot $gap={5} />
              <SliderGlyph $gap={33}><HArrows /></SliderGlyph>
              <Dot $gap={23} />
            </SliderBox>
          </LocalBar>

          <TrackRow>
            <TrackHead>
              <TrackBtn $w={23} $gap={7}><Plus size={11} /></TrackBtn>
              <TrackBtn $w={25} $gap={8}><StackIcon /></TrackBtn>
              <TrackBtn $w={25} $gap={7} $bg="#2f9c55" $fg="#3aa98a">H</TrackBtn>
              <TrackBtn $w={25} $gap={7} $bg="#b5951c" $fg="#f1edd8">S</TrackBtn>
              <TrackBtn $w={21} $gap={204}><TrayIcon /></TrackBtn>
            </TrackHead>
            <TrackRuler>
              <TimeRow>
                {ticks.map((t) => (
                  <TimeTick key={t}>{`1:04:${t}`}</TimeTick>
                ))}
              </TimeRow>
              <BarRow>
                <BarLabel $w={334}>35 1 8</BarLabel>
                <BarLabel $w={86}>35 2</BarLabel>
                <BarLabel $w={350}>35 2 2</BarLabel>
                <BarLabel $w={78}>35 2 3</BarLabel>
              </BarRow>
              <SubRow />
              <PlayheadFlag />
              <PlayheadLine />
            </TrackRuler>
          </TrackRow>
          <OverviewLine>
            <OverviewPart $w={3} $bg="#8a8a8a" />
            <OverviewPart $w={358} $bg="#4a78b8" />
            <OverviewPart $bg="#8c8c8c" />
          </OverviewLine>
          <Strip>
            <ScrollPill />
          </Strip>

          <TabBar>
            <Tab>Piano Roll</Tab>
            <Tab $active>Score</Tab>
            <Tab $off>Step Sequencer</Tab>
            <Tab>Smart Tempo</Tab>
          </TabBar>

          <ScoreBar $h={27}>
            <Btn $w={24} $gap={6}><UpArrow /></Btn>
            <BtnGroup $w={222} $gap={7}>
              <MenuItem $w={58} $pad={7}>Layout<Chev /></MenuItem>
              <MenuItem $w={44} $pad={7}>Edit<Chev /></MenuItem>
              <MenuItem $w={72} $pad={7}>Functions<Chev /></MenuItem>
              <MenuItem $w={48} $pad={7}>View<Chev /></MenuItem>
            </BtnGroup>
            <BtnGroup $w={70} $gap={7}>
              <Seg $w={24} $bg="#7a2ecb" $fg="#b68de8"><SingleLaneIcon /></Seg>
              <Seg $w={23} $fg="#8c8f92"><LanesIcon /></Seg>
              <Seg $w={23} $fg="#b8babc"><TwoLanesIcon /></Seg>
            </BtnGroup>
            <Btn $w={24} $gap={7}><AutoIcon /></Btn>
            <BtnGroup $w={48} $gap={7}>
              <Seg $w={24} $bg="#d9362f" $fg="#f3d6d4"><BrainIcon side="l" /></Seg>
              <Seg $w={24} $bg="#2f9a4e" $fg="#d4eedb"><BrainIcon side="r" /></Seg>
            </BtnGroup>
            <Btn $w={25} $gap={6} $bg="#1a527c" $fg="#cfdce8"><FlexIcon /></Btn>
            <Btn $w={25} $gap={6} $bg="#b5931a" $fg="#dcc877">
              <Link size={10} strokeWidth={2} />
            </Btn>
            <BtnGroup $w={63} $gap={112}>
              <Seg $w={31}>
                <MenuItem $w={22} $pad={3}><Pointer /><Chev /></MenuItem>
              </Seg>
              <Seg $w={32} $fg="#9a9da0">
                <MenuItem $w={24} $pad={2}>
                  <Ico w={10} h={10}><path d="M1 1 L9 9" strokeWidth={1.3} /></Ico>
                  <Chev />
                </MenuItem>
              </Seg>
            </BtnGroup>
            <Btn $w={24} $gap={503} $fg="#b8babc"><HeightIcon /></Btn>
            <SliderBox $w={52} $gap={7}>
              <VArrows />
              <Dot $gap={24} />
            </SliderBox>
          </ScoreBar>

          <ScoreRuler>
            <RulerHead>
              <TrackBtn $w={22} $gap={44}><TrayIcon /></TrackBtn>
            </RulerHead>
            <RulerBlue>
              <RulerTop $pad={108}>
                <RulerMark />
                <RulerNum>34</RulerNum>
              </RulerTop>
              <RulerLower>
                <RulerSeg $w={115} $strong />
                <RulerSeg $w={54} />
                <RulerSeg $w={261} />
                <RulerSeg $w={262} />
                <RulerSeg $w={272} />
              </RulerLower>
            </RulerBlue>
            <RulerBlue $dim>
              <RulerTop $dim $pad={0}>
                <RulerNum $dim>35</RulerNum>
              </RulerTop>
            </RulerBlue>
          </ScoreRuler>

          <Canvas>
            <Gutter>
              <GutterTop />
            </Gutter>
            <Sheet>
              <Score />
            </Sheet>
          </Canvas>
        </Main>
      </Body>
      <Bottom />
    </Page>
  );
}
